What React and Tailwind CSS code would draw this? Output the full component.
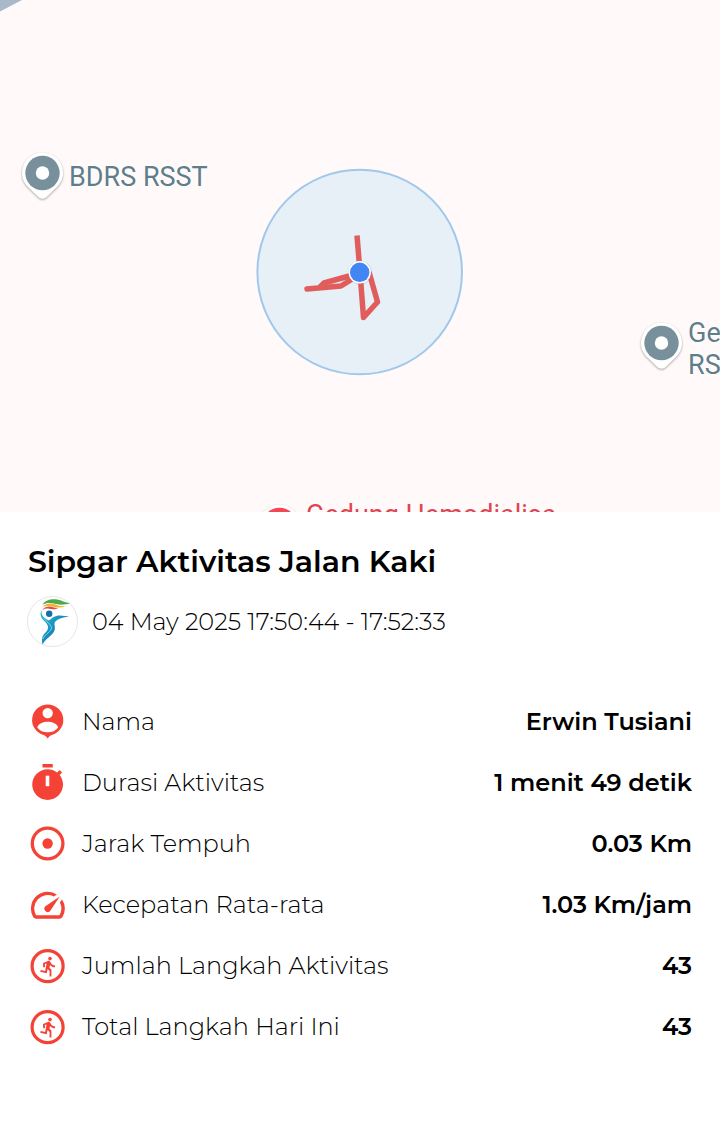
import React from "react";

function Pin({ color = "#78909c" }) {
  return (
    <svg viewBox="0 0 48 56" className="h-14 w-12 shrink-0 drop-shadow-[0_1px_1px_rgba(0,0,0,0.35)]" aria-hidden="true">
      <path d="M24.500 3.500a20.500 20.500 0 0 0-20.500 20.500c0 6 2.600 10.500 6.500 14.500l9.800 9.500c2.400 2.300 6 2.300 8.400 0l9.800-9.500c3.900-4 6.500-8.500 6.500-14.500A20.500 20.500 0 0 0 24.500 3.500z" fill="#fff" />
      <circle cx="24.500" cy="24" r="17.200" fill={color} />
      <circle cx="24.500" cy="24" r="6.700" fill="#fff" />
    </svg>
  );
}

function Track() {
  return (
    <svg viewBox="0 0 208 208" className="absolute top-[168px] left-1/2 h-52 w-52 -translate-x-1/2" role="img" aria-label="Rute">
      <circle cx="103.700" cy="104" r="102.300" fill="#e7eff7" stroke="#a1c8ec" strokeWidth="2" />
      <g fill="none" stroke="#e05d5c" strokeWidth="5.500" strokeLinejoin="round">
        <path d="M101 67.500L104 104L107.500 149.500L121.500 134L113 104" />
        <path d="M104 105L68 115L64 119" />
        <path d="M51 121L85 118L106 105" strokeLinecap="round" />
      </g>
      <circle cx="104" cy="104.500" r="12" fill="#8aa0b4" opacity="0.250" />
      <circle cx="103.700" cy="104.300" r="11.200" fill="#fff" />
      <circle cx="103.700" cy="104.300" r="9.700" fill="#4285f4" />
    </svg>
  );
}

const label = "font-[Roboto,sans-serif] text-[27px] leading-8 whitespace-nowrap [text-shadow:0_0_2px_#fff,0_0_3px_#fff]";

function ActivityMap() {
  return (
    <section aria-label="Peta" className="relative h-[512px] overflow-hidden bg-[#fff9f9]">
      <svg viewBox="0 0 24 12" className="absolute top-0 left-0 h-3 w-6" aria-hidden="true">
        <path d="M0 0H22L0 11.500z" fill="#a9b9c9" />
      </svg>
      <div className="absolute top-[149px] left-[18px] flex items-start gap-[3px] text-[#607d8b]">
        <Pin />
        <span className={label + " mt-3"}>BDRS RSST</span>
      </div>
      <Track />
      <div className="absolute top-[319px] left-[calc(100%-83px)] flex items-start gap-[3px] text-[#607d8b]">
        <Pin />
        <span className={label + " -mt-0.5"}>Gedung<br />RSST</span>
      </div>
      <div className="absolute top-[501px] left-[calc(50%-105px)] flex items-start gap-[3px] text-[#e04452]">
        <Pin color="#f44655" />
        <span className={label + " -mt-0.5"}>Gedung Hemodialisa</span>
      </div>
    </section>
  );
}

function Logo() {
  return (
    <svg viewBox="0 0 51 51" className="size-[51px] shrink-0" role="img" aria-label="Sipgar">
      <defs>
        <linearGradient id="body" x1="0" y1="0" x2="1" y2="1">
          <stop offset="0" stopColor="#2cc0d0" />
          <stop offset="0.550" stopColor="#1288bd" />
          <stop offset="1" stopColor="#0b66ad" />
        </linearGradient>
      </defs>
      <circle cx="25.500" cy="25.500" r="25" fill="#fff" stroke="#dedede" strokeWidth="0.800" />
      <path d="M15.500 8.800C18.500 3.300 25 2.800 30 3.400C35 4 38 6.500 43 7.300C38 9.200 33 9 29 8C24 6.800 19.500 6.400 15.500 8.800z" fill="#4caa4b" />
      <path d="M15.300 11.300C19 6.800 24.500 7 28.500 8.500C32 9.800 35 10.200 38.500 9.900C34 12.200 29 11.700 26 10.800C21.500 9.500 18 9.500 15.300 11.300z" fill="#f5b335" />
      <path d="M15.300 14C18.500 10 22.500 10.200 26 11.300C28 12 29.500 12.200 31.500 12C27.500 13.900 24.500 13.200 22 12.800C19.500 12.300 17.300 12.700 15.300 14z" fill="#e34a3f" />
      <circle cx="22.200" cy="17.700" r="3.200" fill="#146fae" />
      <path d="M14.800 14.200C13.800 20 17.500 22.200 22 24.500C25 21.700 28 19.300 33 19.400L42 20.400C36 21.500 31 22.300 28 26C26.600 28 28.700 31 27.500 34.500C25.500 39.500 19 42 15.500 48.500C14.300 42 15.500 39.500 18.500 36.500C22 33 21.800 30 18.500 26.300C14 22 12.200 18.500 14.800 14.200z" fill="url(#body)" />
      <path d="M17 22.500C19 25.500 24 28 24.500 31.500C24.800 35.500 18 38 15.800 43" fill="none" stroke="#fff" strokeWidth="0.500" />
    </svg>
  );
}

function Icon({ children }) {
  return (
    <svg viewBox="0 0 40 41" className="h-[41px] w-10 shrink-0" fill="#f44336" aria-hidden="true">
      {children}
    </svg>
  );
}

const personIcon = (
  <Icon>
    <path d="M19.700 3.400A15.600 15.600 0 0 0 15.600 34.050C17.200 34.600 18.400 35.900 19.700 37.500C21 35.900 22.200 34.600 23.800 34.050A15.600 15.600 0 0 0 19.700 3.400z" />
    <circle cx="19.700" cy="12.100" r="5.200" fill="#fff" />
    <path d="M9.300 26.400C10 22.700 15.500 20.700 19.700 20.700S29.400 22.700 30.100 26.400C28 29.600 24 31.300 19.700 31.300S11.400 29.600 9.300 26.400z" fill="#fff" />
  </Icon>
);

const timerIcon = (
  <Icon>
    <path transform="translate(-0.900 0.300) scale(1.710)" d="M15 1H9v2h6V1zm4.030 6.390 1.420-1.420c-.43-.51-.9-.99-1.410-1.410l-1.420 1.420A8.962 8.962 0 0 0 12 4c-4.970 0-9 4.030-9 9s4.020 9 9 9 9-4.030 9-9c0-2.120-.74-4.070-1.970-5.610z" />
    <path d="M17.700 13.700h3.600v10.500h-3.600z" fill="#fff" />
  </Icon>
);

const targetIcon = (
  <Icon>
    <circle cx="19.600" cy="20.500" r="15.300" fill="none" stroke="#f44336" strokeWidth="3.300" />
    <circle cx="19.600" cy="20.500" r="5.200" />
  </Icon>
);

const speedIcon = (
  <Icon>
    <path transform="translate(-0.500 0.900) scale(1.690)" d="M20.380 8.570l-1.230 1.850a8 8 0 0 1-.22 7.580H5.070A8 8 0 0 1 15.580 6.850l1.850-1.230A10 10 0 0 0 3.350 19a2 2 0 0 0 1.720 1h13.850a2 2 0 0 0 1.740-1 10 10 0 0 0-.27-10.440zm-9.790 6.840a2 2 0 0 0 2.830 0l5.660-8.490-8.490 5.660a2 2 0 0 0 0 2.830z" />
  </Icon>
);

const runIcon = (
  <Icon>
    <circle cx="19.600" cy="21.200" r="15.500" fill="none" stroke="#f44336" strokeWidth="3.200" />
    <path transform="translate(9.600 10.300) scale(0.920)" d="M13.490 5.480c1.100 0 2-.9 2-2s-.9-2-2-2-2 .9-2 2 .9 2 2 2zm-3.600 13.900l1-4.400 2.100 2v6h2v-7.500l-2.100-2 .6-3c1.300 1.500 3.300 2.500 5.500 2.500v-2c-1.900 0-3.500-1-4.300-2.400l-1-1.600c-.4-.6-1-1-1.700-1-.3 0-.5.1-.8.1l-5.200 2.200v4.700h2v-3.400l1.800-.7-1.600 8.100-4.900-1-.4 2 7 1.400z" />
  </Icon>
);

const rows = [
  { icon: personIcon, name: "Nama", value: "Erwin Tusiani" },
  { icon: timerIcon, name: "Durasi Aktivitas", value: "1 menit 49 detik" },
  { icon: targetIcon, name: "Jarak Tempuh", value: "0.03 Km" },
  { icon: speedIcon, name: "Kecepatan Rata-rata", value: "1.03 Km/jam" },
  { icon: runIcon, name: "Jumlah Langkah Aktivitas", value: "43" },
  { icon: runIcon, name: "Total Langkah Hari Ini", value: "43" },
];

export default function App() {
  return (
    <main className="min-h-screen bg-white font-[Montserrat,Inter,sans-serif] text-black">
      <ActivityMap />
      <section className="px-7 pt-7 pb-14">
        <h1 className="text-[30px] leading-[44px] font-semibold">Sipgar Aktivitas Jalan Kaki</h1>
        <div className="-ml-px mt-3 flex items-center gap-3.5">
          <Logo />
          <p className="text-2xl font-light">04 May 2025 17:50:44 - 17:52:33</p>
        </div>
        <dl className="mt-11">
          {rows.map((row) => (
            <div key={row.name} className="flex h-[61px] items-center">
              <dt className="flex items-center gap-3.5 text-2xl font-light">
                {row.icon}
                {row.name}
              </dt>
              <dd className="ml-auto text-right text-2xl font-semibold">{row.value}</dd>
            </div>
          ))}
        </dl>
      </section>
    </main>
  );
}
